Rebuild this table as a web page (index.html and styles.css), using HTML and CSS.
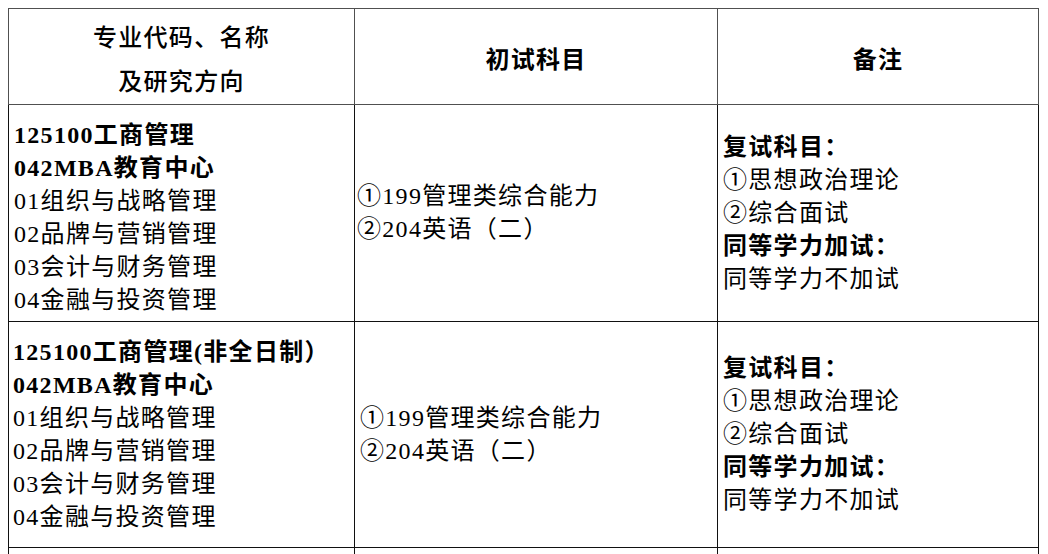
FILE: index.html
```html
<!DOCTYPE html>
<html lang="zh-CN">
<head>
<meta charset="utf-8">
<title>专业目录</title>
<link rel="stylesheet" href="styles.css">
</head>
<body>
<table class="catalog">
  <colgroup>
    <col class="c1">
    <col class="c2">
    <col class="c3">
  </colgroup>
  <thead>
    <tr class="head-row">
      <th class="h-major">专业代码、名称<br>及研究方向</th>
      <th class="h-bold">初试科目</th>
      <th class="h-bold">备注</th>
    </tr>
  </thead>
  <tbody>
    <tr class="row row-1">
      <td class="major shift">
        <div class="b">125100工商管理</div>
        <div class="b">042MBA教育中心</div>
        <div>01组织与战略管理</div>
        <div>02品牌与营销管理</div>
        <div>03会计与财务管理</div>
        <div>04金融与投资管理</div>
      </td>
      <td class="exam">
        <div>①199管理类综合能力</div>
        <div>②204英语（二）</div>
      </td>
      <td class="note">
        <div class="b">复试科目：</div>
        <div>①思想政治理论</div>
        <div>②综合面试</div>
        <div class="b">同等学力加试：</div>
        <div>同等学力不加试</div>
      </td>
    </tr>
    <tr class="row row-2">
      <td class="major narrow">
        <div class="b">125100工商管理(非全日制）</div>
        <div class="b">042MBA教育中心</div>
        <div>01组织与战略管理</div>
        <div>02品牌与营销管理</div>
        <div>03会计与财务管理</div>
        <div>04金融与投资管理</div>
      </td>
      <td class="exam wide">
        <div>①199管理类综合能力</div>
        <div>②204英语（二）</div>
      </td>
      <td class="note">
        <div class="b">复试科目：</div>
        <div>①思想政治理论</div>
        <div>②综合面试</div>
        <div class="b">同等学力加试：</div>
        <div>同等学力不加试</div>
      </td>
    </tr>
    <tr class="row row-3">
      <td></td>
      <td></td>
      <td></td>
    </tr>
  </tbody>
</table>
</body>
</html>
```

FILE: styles.css
```css
html, body {
  background: #ffffff;
}
body {
  margin: 8px;
  font-family: "Liberation Serif", "Noto Sans CJK SC", serif;
  color: #000;
  overflow: hidden;
}
.catalog {
  border-collapse: collapse;
  table-layout: fixed;
  width: 1031px;
}
.c1 { width: 346px; }
.c2 { width: 363px; }
.c3 { width: 321px; }

.head-row {
  height: 96px;
}
.head-row th {
  border: 1px solid #505050;
  font-size: 24px;
  line-height: 44px;
  letter-spacing: 1.3px;
  padding: 6px 0 0;
  text-align: center;
  vertical-align: middle;
}
.h-major {
  font-weight: 500;
}
.h-bold {
  font-weight: 700;
}

.row td {
  border: 1px solid #111;
  font-size: 24px;
  line-height: 33px;
  letter-spacing: 1.3px;
  vertical-align: middle;
  padding: 0 4px 0 5px;
  text-align: left;
  white-space: nowrap;
}
.row-1 { height: 217px; }
.row-2 { height: 226px; }
.row-3 { height: 40px; }

.row td.shift { padding-top: 10px; padding-left: 5px; }
.row td.narrow { padding-left: 4px; }
.row td.exam { padding-left: 2px; }
.row td.exam.wide { padding-left: 5px; }
.row td.note { padding-left: 5px; }

.b {
  font-weight: 700;
}
```
